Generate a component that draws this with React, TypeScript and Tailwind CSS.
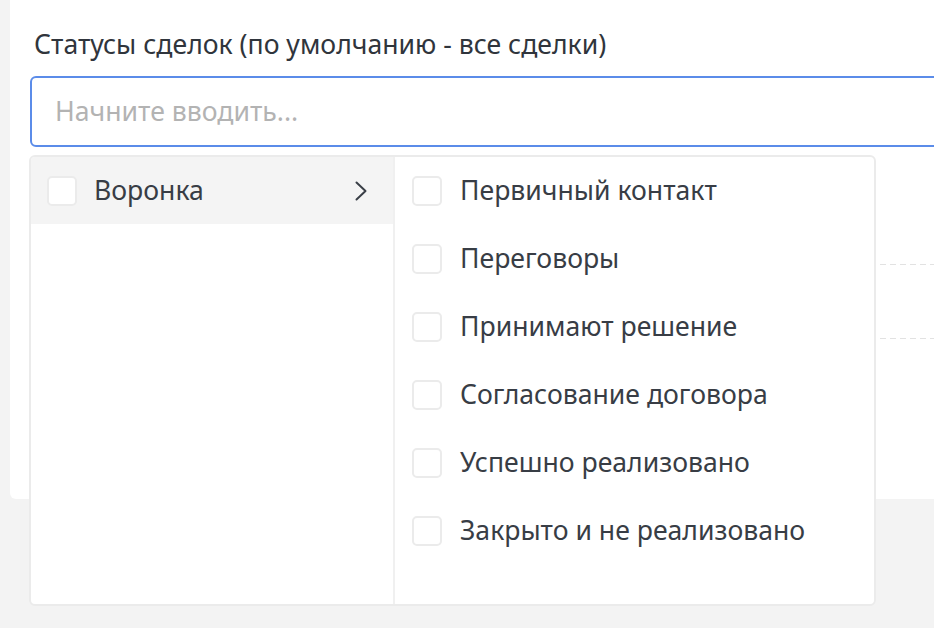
import React from "react";

const stages = [
  "Первичный контакт",
  "Переговоры",
  "Принимают решение",
  "Согласование договора",
  "Успешно реализовано",
  "Закрыто и не реализовано",
];

function Box() {
  return (
    <span className="block h-[30px] w-[30px] shrink-0 rounded-[5px] border-2 border-[#ebebeb] bg-white" />
  );
}

function Chevron() {
  return (
    <svg width="12" height="20" viewBox="0 0 12 20" fill="none">
      <path d="M1.5 1.5 L10.5 10 L1.5 18.5" stroke="#3a3f47" strokeWidth="2" strokeLinecap="round" strokeLinejoin="round" />
    </svg>
  );
}

export default function App() {
  return (
    <div
      className="relative h-[628px] w-[934px] overflow-hidden bg-[#f3f3f3] text-[#383d45]"
      style={{ fontFamily: '"Noto Sans", "Open Sans", sans-serif' }}
    >
      <div className="ml-[10px] h-[499px] w-[1000px] rounded-bl-[6px] bg-white pl-[20px] pt-[26px]">
        <div className="pl-[4px] text-[26.6px] leading-[36px] text-[#30353c]">
          Статусы сделок (по умолчанию - все сделки)
        </div>
        <div className="mt-[14px] flex h-[71px] w-[980px] items-center rounded-[6px] border-2 border-[#5b8ce9] pl-[23px] text-[26.6px] text-[#b3b3b3]">
          Начните вводить...
        </div>
        <div className="mt-[117px] h-px w-[960px] bg-[repeating-linear-gradient(90deg,#e2e2e2_0px,#e2e2e2_6px,transparent_6px,transparent_10px)]" />
        <div className="mt-[73px] h-px w-[960px] bg-[repeating-linear-gradient(90deg,#e2e2e2_0px,#e2e2e2_6px,transparent_6px,transparent_10px)]" />
      </div>

      <div className="absolute left-[29px] top-[155px] flex h-[451px] w-[847px] overflow-hidden rounded-[6px] border-2 border-[#ebebeb] bg-white text-[26.6px]">
        <div className="w-[364px] shrink-0 border-r-2 border-[#f0f0f0]">
          <div className="flex h-[67px] items-center bg-[#f4f4f4] pl-[16px] pr-[26px]">
            <Box />
            <span className="ml-[17px] flex-1">Воронка</span>
            <Chevron />
          </div>
        </div>
        <div className="flex-1 pl-[17px]">
          {stages.map((s) => (
            <div key={s} className="flex h-[68px] items-center">
              <Box />
              <span className="ml-[18px]">{s}</span>
            </div>
          ))}
        </div>
      </div>
    </div>
  );
}
